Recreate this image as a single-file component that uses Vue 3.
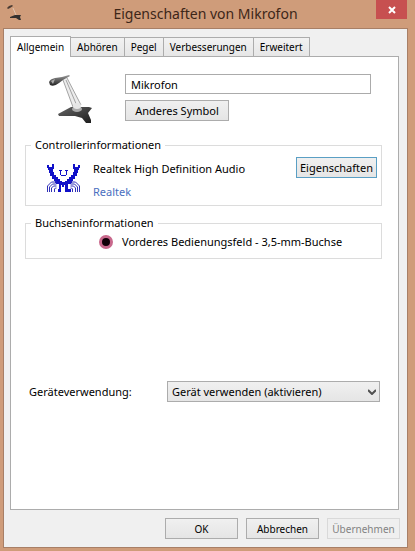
<template>
    <div class="window">
        <header class="titlebar">
            <svg class="app-icon" viewBox="0 0 16 18" aria-hidden="true">
                <path d="M0 4 L2 2 L5 1 L6 2 L3 4 L1 5 Z" fill="#4b3b33" />
                <path d="M6 4 L9 11" stroke="#dfc4b0" stroke-width="1" />
                <path d="M3 13 L8 11 L14 11 L13 13 L14 16 L12 16 L9 14 L3 14 Z" fill="#33302f" />
            </svg>
            <h1>Eigenschaften von Mikrofon</h1>
            <button class="close" type="button" aria-label="Schließen">
                <svg viewBox="0 0 8 8" aria-hidden="true">
                    <path d="M1 1 L7 7 M7 1 L1 7" stroke="#fff" stroke-width="2" />
                </svg>
            </button>
        </header>

        <main class="client">
            <div class="tabs" role="tablist">
                <button
                    v-for="tab in tabs"
                    :key="tab"
                    type="button"
                    role="tab"
                    class="tab"
                    :class="{ active: tab === activeTab }"
                    :aria-selected="tab === activeTab"
                    @click="activeTab = tab"
                >{{ tab }}</button>
            </div>

            <section class="panel" role="tabpanel">
                <div class="device">
                    <svg class="mic" viewBox="0 0 44 50" aria-hidden="true">
                        <defs>
                            <linearGradient id="head" x1="0" y1="0" x2="0" y2="1">
                                <stop offset="0" stop-color="#999" />
                                <stop offset="1" stop-color="#222" />
                            </linearGradient>
                            <linearGradient id="base" x1="0" y1="0" x2="1" y2="1">
                                <stop offset="0" stop-color="#666" />
                                <stop offset="1" stop-color="#1c1c1c" />
                            </linearGradient>
                        </defs>
                        <path d="M9 40 L22 33 L40 33 L43 34 L39 39 L42 46 L42 49 L37 49 L33 44 L26 42 L10 42 Z" fill="url(#base)" />
                        <path d="M14 6 L18 4 L32 31 L24 33 Z" fill="#ececec" />
                        <path d="M14 6 L24 33 M17 6 L28 32 M18 4 L32 31" stroke="#a4a4a4" stroke-width="1" fill="none" />
                        <ellipse cx="28" cy="35" rx="5" ry="3" fill="#aaa" />
                        <ellipse cx="28" cy="32" rx="4" ry="3" fill="#e6e6e6" />
                        <path d="M0 8 Q1 5 6 4 L13 3 L20 1 L21 2 L14 6 L10 9 Q5 13 1 11 Z" fill="url(#head)" />
                        <path d="M2 7 L6 5 L4 10 Z" fill="#aaa" />
                    </svg>
                    <div class="device-fields">
                        <input v-model="deviceName" class="name" type="text" aria-label="Gerätename" />
                        <button class="btn symbol" type="button">Anderes Symbol</button>
                    </div>
                </div>

                <fieldset class="group controller">
                    <legend>Controllerinformationen</legend>
                    <svg class="crab" viewBox="0 0 34 30" aria-hidden="true">
                        <g fill="#1010c8">
                            <path d="M0 1 h2 v2 h3 v-3 h2 v5 h-1 v3 h1 v3 h2 v2 h2 v2 h2 v2 h1 v2 h-6 v-2 h-1 v-2 h-2 v-3 h-2 v-3 h-1 v-3 h-1 v-2 h-1 Z" />
                            <path d="M33 1 h-2 v2 h-3 v-3 h-2 v5 h1 v3 h-1 v3 h-2 v2 h-2 v2 h-2 v2 h-1 v2 h6 v-2 h1 v-2 h2 v-3 h2 v-3 h1 v-3 h1 v-2 h1 Z" />
                            <path d="M9 17 h6 v1 h3 v-1 h6 v3 h-3 v5 h3 v3 h-6 v-7 h-1 v2 h-2 v-2 h-1 v7 h-3 v-3 h1 v-5 h-3 Z" />
                        </g>
                        <path d="M12 6.5 h3 M18 6.5 h3 M13.5 6 v5 M19.5 6 v5 M14 11.5 h5" fill="none" stroke="#1010c8" stroke-width="1" />
                        <g fill="none" stroke="#3030b8" stroke-width="1">
                            <path d="M.5 28 v-6 l4 -4 h5 M2.5 28 v-5 l3 -3 h4 M4.5 28 v-4 l2 -2 h3 M7.5 28 v-3 l1 -1 h1" />
                            <path d="M32.5 28 v-6 l-4 -4 h-5 M30.5 28 v-5 l-3 -3 h-4 M28.5 28 v-4 l-2 -2 h-3 M25.5 28 v-3 l-1 -1 h-1" />
                        </g>
                    </svg>
                    <div class="controller-text">
                        <span>Realtek High Definition Audio</span>
                        <a href="#">Realtek</a>
                    </div>
                    <button class="btn focused" type="button">Eigenschaften</button>
                </fieldset>

                <fieldset class="group jack">
                    <legend>Buchseninformationen</legend>
                    <span class="jack-dot"></span>
                    <span>Vorderes Bedienungsfeld - 3,5-mm-Buchse</span>
                </fieldset>

                <div class="usage">
                    <label for="usage">Geräteverwendung:</label>
                    <div class="select-box">
                        <select id="usage" v-model="usage">
                            <option value="on">Gerät verwenden (aktivieren)</option>
                            <option value="off">Gerät nicht verwenden (deaktivieren)</option>
                        </select>
                        <svg class="arrow" viewBox="0 0 8 6" aria-hidden="true">
                            <path d="M0 1 L4 5 L8 1" fill="none" stroke="#505050" stroke-width="2" />
                        </svg>
                    </div>
                </div>
            </section>

            <footer class="actions">
                <button class="btn" type="button">OK</button>
                <button class="btn" type="button">Abbrechen</button>
                <button class="btn" type="button" disabled>Übernehmen</button>
            </footer>
        </main>
    </div>
</template>

<script setup>
import { ref } from 'vue';

const tabs = ['Allgemein', 'Abhören', 'Pegel', 'Verbesserungen', 'Erweitert'];
const activeTab = ref('Allgemein');
const deviceName = ref('Mikrofon');
const usage = ref('on');
</script>

<style>
body {
    margin: 0;
}
</style>

<style scoped>
.window {
    box-sizing: border-box;
    display: flex;
    flex-direction: column;
    min-height: 100vh;
    padding: 0 7px 3px 3px;
    background: #cf9c7a;
    color: #000;
    font-family: "Noto Sans", "Open Sans", sans-serif;
    font-size: 11px;
    line-height: 16px;
}

button,
input,
select {
    box-sizing: border-box;
    margin: 0;
    font: inherit;
    color: inherit;
}

.titlebar {
    display: grid;
    grid-template-columns: 32px 1fr 32px;
    align-items: start;
    height: 28px;
}

.app-icon {
    width: 16px;
    height: 18px;
    margin: 4px 0 0 4px;
}

h1 {
    margin: 0;
    font-size: 14px;
    font-weight: 400;
    line-height: 28px;
    text-align: center;
    color: #3d2618;
}

.close {
    display: flex;
    align-items: center;
    justify-content: center;
    width: 31px;
    height: 19px;
    padding: 0;
    border: 0;
    background: #c75050;
}

.close svg {
    width: 8px;
    height: 8px;
}

.client {
    display: flex;
    flex: 1;
    flex-direction: column;
    padding: 7px 8px 8px 6px;
    border: 1px solid #a87f66;
    background: #f0f0f0;
}

.tabs {
    display: flex;
    align-items: flex-end;
}

.tab {
    height: 19px;
    margin-left: -1px;
    padding: 0 6px;
    border: 1px solid #acacac;
    border-bottom: 0;
    background: linear-gradient(#f2f2f2, #e6e6e6);
    font-size: 10px;
    line-height: 18px;
    white-space: nowrap;
}

.tab.active {
    position: relative;
    height: 21px;
    margin: 0 0 -1px;
    background: #fff;
}

.panel {
    flex: 1;
    padding: 17px 16px 0 14px;
    border: 1px solid #acacac;
    background: #fff;
}

.device {
    display: flex;
    gap: 32px;
    padding: 0 11px 0 24px;
}

.mic {
    width: 44px;
    height: 50px;
}

.device-fields {
    display: flex;
    flex: 1;
    flex-direction: column;
    align-items: flex-start;
    gap: 6px;
}

.name {
    width: 100%;
    height: 20px;
    padding: 0 5px;
    border: 1px solid #ababab;
    background: #fff;
}

.btn {
    height: 21px;
    padding: 0;
    border: 1px solid #acacac;
    background: linear-gradient(#f0f0f0, #e5e5e5);
    line-height: 18px;
    white-space: nowrap;
}

.btn.symbol {
    width: 104px;
}

.btn.focused {
    width: 81px;
    border-color: #5a9fc4;
}

.btn:disabled {
    border-color: #d9d9d9;
    background: #efefef;
    color: #838383;
}

.group {
    display: flex;
    min-width: 0;
    margin: 0;
    border: 1px solid #dcdcdc;
}

.group legend {
    padding: 0 4px;
}

.controller {
    align-items: flex-start;
    margin-top: 13px;
    padding: 4px 4px 5px 5px;
}

.crab {
    width: 34px;
    height: 30px;
    margin: 7px 12px 0 16px;
}

.controller-text {
    display: flex;
    flex: 1;
    flex-direction: column;
    gap: 7px;
    padding-top: 4px;
}

.controller-text a {
    color: #4a6fc0;
    text-decoration: none;
}

.jack {
    align-items: center;
    gap: 9px;
    margin-top: 9px;
    padding: 3px 5px 8px;
}

.jack-dot {
    box-sizing: border-box;
    width: 14px;
    height: 14px;
    margin-left: 68px;
    border: 3px solid #c8688c;
    border-radius: 50%;
    background: #100008;
}

.usage {
    display: flex;
    align-items: center;
    margin-top: 122px;
    padding: 0 2px 0 4px;
}

.usage label {
    width: 138px;
}

.select-box {
    position: relative;
    flex: 1;
}

.select-box select {
    display: block;
    width: 100%;
    height: 21px;
    padding: 0 20px 0 4px;
    border: 1px solid #acacac;
    border-radius: 0;
    background: linear-gradient(#f0f0f0, #e5e5e5);
    appearance: none;
}

.arrow {
    position: absolute;
    top: 8px;
    right: 4px;
    width: 8px;
    height: 6px;
    pointer-events: none;
}

.actions {
    display: flex;
    justify-content: flex-end;
    gap: 8px;
    margin: 8px -1px 0 0;
}

.actions .btn {
    width: 73px;
    font-size: 10px;
}
</style>
